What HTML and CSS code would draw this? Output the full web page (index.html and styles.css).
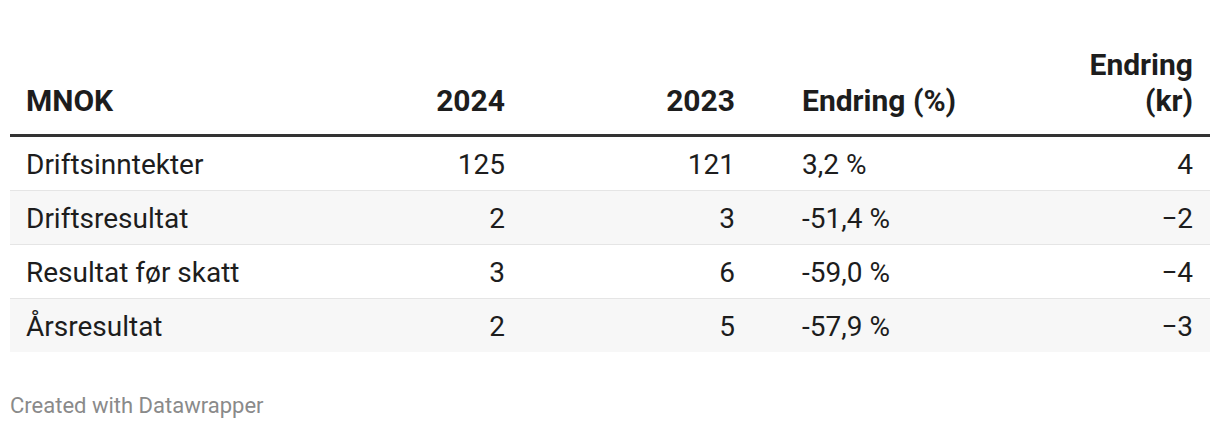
FILE: index.html
```html
<!DOCTYPE html>
<html lang="no">
<head>
<meta charset="utf-8">
<title>MNOK</title>
<link rel="stylesheet" href="styles.css">
</head>
<body>
<div class="chart">
  <table class="dw-table">
    <colgroup>
      <col class="c0"><col class="c1"><col class="c2"><col class="c3"><col class="c4">
    </colgroup>
    <thead>
      <tr>
        <th class="left">MNOK</th>
        <th class="num">2024</th>
        <th class="num">2023</th>
        <th class="pct">Endring (%)</th>
        <th class="num last">Endring (kr)</th>
      </tr>
    </thead>
    <tbody>
      <tr><td class="left">Driftsinntekter</td><td class="num">125</td><td class="num">121</td><td class="pct">3,2 %</td><td class="num last">4</td></tr>
      <tr><td class="left">Driftsresultat</td><td class="num">2</td><td class="num">3</td><td class="pct">-51,4 %</td><td class="num last">−2</td></tr>
      <tr><td class="left">Resultat før skatt</td><td class="num">3</td><td class="num">6</td><td class="pct">-59,0 %</td><td class="num last">−4</td></tr>
      <tr><td class="left">Årsresultat</td><td class="num">2</td><td class="num">5</td><td class="pct">-57,9 %</td><td class="num last">−3</td></tr>
    </tbody>
  </table>
  <div class="footer">Created with Datawrapper</div>
</div>
</body>
</html>
```
FILE: styles.css
```css
html, body {
  margin: 0;
  padding: 0;
  background: #ffffff;
}
body {
  font-family: Roboto, "Liberation Sans", Arial, sans-serif;
  color: #1d1d1d;
}
.chart {
  padding: 39px 10px 0 10px;
  width: 1200px;
}
.dw-table {
  width: 1200px;
  table-layout: fixed;
  border-collapse: separate;
  border-spacing: 0;
}
.c0 { width: 280px; }
.c1 { width: 231px; }
.c2 { width: 230px; }
.c3 { width: 286px; }
.c4 { width: 173px; }

.dw-table th {
  font-size: 30px;
  line-height: 36px;
  font-weight: 700;
  vertical-align: bottom;
  padding: 8px 16px 15px 16px;
  border-bottom: 3px solid #333333;
}
.dw-table td {
  font-size: 28px;
  line-height: 33.6px;
  font-weight: 400;
  padding: 11px 16px 8.5px 16px;
  border-bottom: 1px solid #e5e5e5;
}
.dw-table tbody tr:nth-child(even) td {
  background: #f7f7f7;
}
.dw-table tbody tr:last-child td {
  border-bottom: none;
}
.left { text-align: left; }
.num { text-align: right; }
.dw-table .pct { text-align: left; padding-left: 51px; }
.dw-table .last { padding-right: 17px; padding-left: 30px; }

.footer {
  margin-top: 41px;
  font-size: 22px;
  line-height: 26.4px;
  color: #8a8a8a;
}
```
